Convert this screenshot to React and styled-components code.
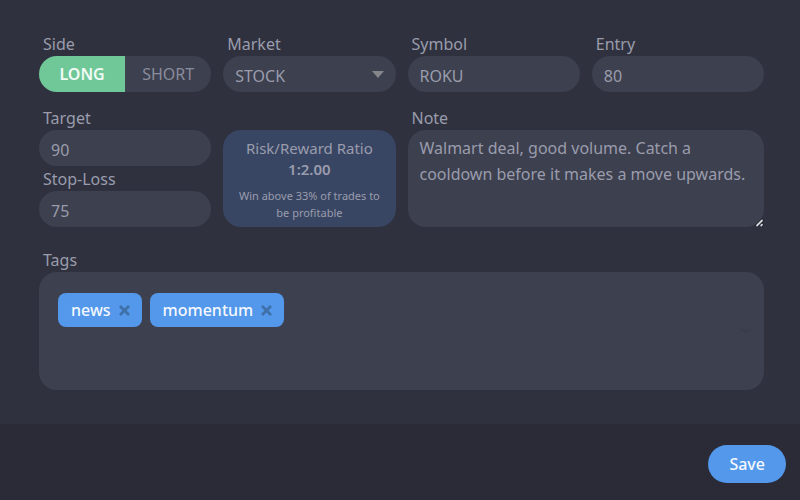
import { useState } from 'react';
import styled, { createGlobalStyle } from 'styled-components';

const GlobalStyle = createGlobalStyle`
  * {
    box-sizing: border-box;
  }

  body {
    margin: 0;
    background: #2a2b37;
    color: #9a9cad;
    font-family: 'Noto Sans', 'Open Sans', sans-serif;
    font-size: 16px;
  }

  button, input, select, textarea {
    margin: 0;
    border: 0;
    color: inherit;
    font: inherit;
  }
`;

const Form = styled.form`
  display: flex;
  flex-direction: column;
  min-height: 100vh;
`;

const Body = styled.div`
  display: flex;
  flex-direction: column;
  gap: 20px;
  padding: 31px 36px 34px 39px;
  background: #2f323e;
`;

const Fields = styled.div`
  display: grid;
  grid-template-columns: repeat(4, minmax(0, 1fr));
  gap: 13px 12px;
`;

const Column = styled.div`
  display: flex;
  flex-direction: column;
  grid-column: span ${({ $span }) => $span || 1};
`;

const Label = styled.label`
  height: 25px;
  padding-left: 4px;
  line-height: 27px;
`;

const Input = styled.input`
  width: 100%;
  height: 36px;
  padding: 3px 12px 0;
  border-radius: 18px;
  background: #3d404e;
`;

const SelectWrap = styled.div`
  display: grid;
  align-items: center;

  > * {
    grid-area: 1 / 1;
  }
`;

const Select = styled.select`
  appearance: none;
  width: 100%;
  height: 36px;
  padding: 3px 32px 0 12px;
  border-radius: 18px;
  background: #3d404e;
`;

const Arrow = styled.svg`
  justify-self: end;
  margin-right: 12px;
  fill: #85868a;
  pointer-events: none;
`;

const Toggle = styled.div`
  display: flex;
  height: 36px;
  overflow: hidden;
  border-radius: 18px;
  background: #3d404e;
`;

const ToggleButton = styled.button`
  flex: 1;
  padding: 0;
  background: ${({ $active }) => ($active ? '#70c798' : 'transparent')};
  color: ${({ $active }) => ($active ? '#f2fbf6' : '#8a8c9d')};
  font-weight: ${({ $active }) => ($active ? 600 : 400)};
`;

const Ratio = styled.div`
  display: flex;
  flex: 1;
  flex-direction: column;
  margin-top: 25px;
  padding: 8px 10px 6px;
  border-radius: 18px;
  background: #384663;
  font-size: 15px;
  line-height: 21px;
  text-align: center;
`;

const RatioValue = styled.strong`
  font-weight: 600;
`;

const RatioHint = styled.small`
  margin-top: 7px;
  font-size: 11px;
  line-height: 17px;
`;

const TextareaWrap = styled.div`
  position: relative;
  display: flex;
  flex: 1;
`;

const Textarea = styled.textarea`
  width: 100%;
  padding: 5px 12px;
  border-radius: 18px;
  background: #3d404e;
  line-height: 26px;
  resize: vertical;

  &::-webkit-resizer {
    background: none;
  }
`;

const Grip = styled.svg`
  position: absolute;
  right: 0;
  bottom: 0;
  fill: none;
  stroke-linecap: round;
  pointer-events: none;
`;

const TagBox = styled.div`
  display: flex;
  align-items: center;
  gap: 8px;
  min-height: 118px;
  padding: 21px 12px 21px 19px;
  border-radius: 18px;
  background: #3d404e;
`;

const TagList = styled.div`
  display: flex;
  flex: 1;
  flex-wrap: wrap;
  align-self: flex-start;
  gap: 8px;
`;

const Tag = styled.span`
  display: flex;
  align-items: center;
  gap: 8px;
  height: 34px;
  padding: 0 12px 0 13px;
  border-radius: 8px;
  background: #5398ea;
  color: #f4f8fe;
  font-weight: 500;
`;

const RemoveButton = styled.button`
  display: flex;
  padding: 0;
  background: none;
  color: #4070a8;
`;

const TagInput = styled.input`
  flex: 1;
  min-width: 40px;
  height: 34px;
  padding: 0;
  background: none;
  outline: 0;
`;

const Chevron = styled.svg`
  fill: none;
  stroke: #393c48;
  stroke-width: 2;
`;

const Footer = styled.footer`
  display: flex;
  justify-content: flex-end;
  padding: 21px 14px 17px;
`;

const SaveButton = styled.button`
  height: 38px;
  padding: 0 21px;
  border-radius: 19px;
  background: #5398ea;
  color: #f4f8fe;
  font-weight: 500;
`;

function Field({ id, label, value }) {
  return (
    <>
      <Label htmlFor={id}>{label}</Label>
      <Input id={id} defaultValue={value} />
    </>
  );
}

export default function App() {
  const [side, setSide] = useState('LONG');
  const [tags, setTags] = useState(['news', 'momentum']);

  return (
    <>
      <GlobalStyle />
      <Form onSubmit={(e) => e.preventDefault()}>
        <Body>
          <Fields>
            <Column>
              <Label as="span" id="side">Side</Label>
              <Toggle role="group" aria-labelledby="side">
                {['LONG', 'SHORT'].map((name) => (
                  <ToggleButton
                    key={name}
                    type="button"
                    $active={side === name}
                    aria-pressed={side === name}
                    onClick={() => setSide(name)}
                  >
                    {name}
                  </ToggleButton>
                ))}
              </Toggle>
            </Column>
            <Column>
              <Label htmlFor="market">Market</Label>
              <SelectWrap>
                <Select id="market">
                  <option>STOCK</option>
                </Select>
                <Arrow width="12" height="7" viewBox="0 0 12 7">
                  <path d="M0 0h12L6 7z" />
                </Arrow>
              </SelectWrap>
            </Column>
            <Column>
              <Field id="symbol" label="Symbol" value="ROKU" />
            </Column>
            <Column>
              <Field id="entry" label="Entry" value="80" />
            </Column>

            <Column>
              <Field id="target" label="Target" value="90" />
              <Field id="stop-loss" label="Stop-Loss" value="75" />
            </Column>
            <Column>
              <Ratio>
                <span>Risk/Reward Ratio</span>
                <RatioValue>1:2.00</RatioValue>
                <RatioHint>Win above 33% of trades to be profitable</RatioHint>
              </Ratio>
            </Column>
            <Column $span={2}>
              <Label htmlFor="note">Note</Label>
              <TextareaWrap>
                <Textarea
                  id="note"
                  spellCheck={false}
                  defaultValue="Walmart deal, good volume. Catch a cooldown before it makes a move upwards."
                />
                <Grip width="10" height="9" viewBox="0 0 10 9">
                  <path d="M3 7.5l5-5M7.2 7.5l.8-.8" stroke="#23242e" strokeWidth="3.6" />
                  <path d="M3 7.5l5-5M7.2 7.5l.8-.8" stroke="#d3d4dc" strokeWidth="1.8" />
                </Grip>
              </TextareaWrap>
            </Column>
          </Fields>

          <Column>
            <Label htmlFor="tags">Tags</Label>
            <TagBox>
              <TagList>
                {tags.map((tag) => (
                  <Tag key={tag}>
                    {tag}
                    <RemoveButton
                      type="button"
                      aria-label={`Remove ${tag}`}
                      onClick={() => setTags(tags.filter((t) => t !== tag))}
                    >
                      <svg width="11" height="11" viewBox="0 0 11 11" stroke="currentColor" strokeWidth="2.8">
                        <path d="M1 1l9 9M10 1l-9 9" />
                      </svg>
                    </RemoveButton>
                  </Tag>
                ))}
                <TagInput id="tags" />
              </TagList>
              <Chevron width="12" height="6" viewBox="0 0 12 6">
                <path d="M1 1l5 3 5-3" />
              </Chevron>
            </TagBox>
          </Column>
        </Body>
        <Footer>
          <SaveButton type="submit">Save</SaveButton>
        </Footer>
      </Form>
    </>
  );
}
